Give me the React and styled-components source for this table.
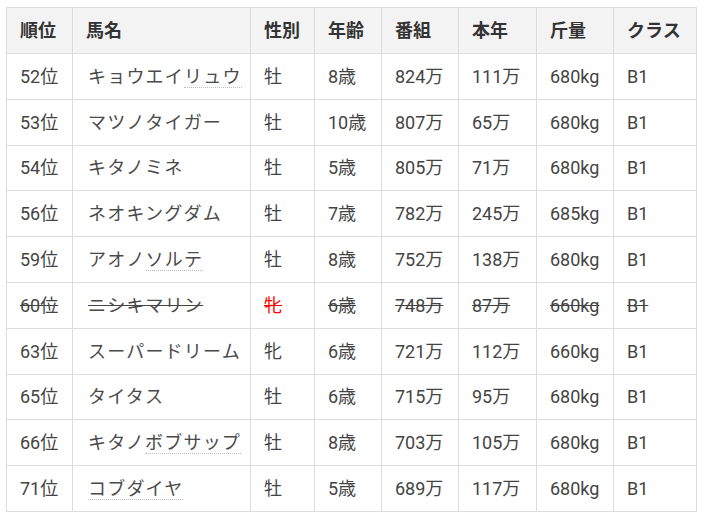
import React from "react";
import styled, { createGlobalStyle } from "styled-components";

const Global = createGlobalStyle`
  html, body { margin: 0; padding: 0; background: #fff; }
  body { font-family: Roboto, "Noto Sans CJK JP", sans-serif; color: #333; }
`;

const Wrap = styled.div`
  padding: 7px 6px;
`;

const Table = styled.table`
  border-collapse: collapse;
  width: 690px;
  table-layout: fixed;
  font-size: 18px;
  line-height: 26px;
`;

const Th = styled.th`
  background: #f3f3f3;
  border: 1px solid #dcdcdc;
  padding: 10px 13px 9px;
  text-align: left;
  font-weight: 700;
  color: #333;
  white-space: nowrap;
`;

const Td = styled.td`
  border: 1px solid #dcdcdc;
  padding: 9.8px 13px 9px;
  text-align: left;
  color: #444;
  white-space: nowrap;
  text-decoration: ${(p) => (p.$struck ? "line-through" : "none")};
  ${(p) => p.$red && "color: #ff0000;"}
`;

const Name = styled.span`
  letter-spacing: 1.2px;
  margin-left: 2px;
  color: #4a4a4a;
`;

const Dotted = styled.span`
  border-bottom: 1px dotted #bdbdbd;
`;

const cols = [66, 178, 64, 67, 77, 78, 77, 83];
const heads = ["順位", "馬名", "性別", "年齢", "番組", "本年", "斤量", "クラス"];

const rows = [
  ["52位", ["キョウエイ", "リュウ"], "牡", "8歳", "824万", "111万", "680kg", "B1"],
  ["53位", ["マツノタイガー", ""], "牡", "10歳", "807万", "65万", "680kg", "B1"],
  ["54位", ["キタノミネ", ""], "牡", "5歳", "805万", "71万", "680kg", "B1"],
  ["56位", ["ネオキングダム", ""], "牡", "7歳", "782万", "245万", "685kg", "B1"],
  ["59位", ["アオノ", "ソルテ"], "牡", "8歳", "752万", "138万", "680kg", "B1"],
  ["60位", ["ニシキマリン", ""], "牝", "6歳", "748万", "87万", "660kg", "B1", true],
  ["63位", ["スーパードリーム", ""], "牝", "6歳", "721万", "112万", "660kg", "B1"],
  ["65位", ["タイタス", ""], "牡", "6歳", "715万", "95万", "680kg", "B1"],
  ["66位", ["キタノ", "ボブサップ"], "牡", "8歳", "703万", "105万", "680kg", "B1"],
  ["71位", ["", "コブダイヤ"], "牡", "5歳", "689万", "117万", "680kg", "B1"],
];

export default function App() {
  return (
    <>
      <Global />
      <Wrap>
        <Table>
          <colgroup>
            {cols.map((w, i) => (
              <col key={i} style={{ width: w }} />
            ))}
          </colgroup>
          <thead>
            <tr>
              {heads.map((h) => (
                <Th key={h}>{h}</Th>
              ))}
            </tr>
          </thead>
          <tbody>
            {rows.map((r) => {
              const struck = !!r[8];
              return (
                <tr key={r[0]}>
                  <Td $struck={struck}>{r[0]}</Td>
                  <Td $struck={struck}>
                    <Name>
                      {r[1][0]}
                      {r[1][1] && <Dotted>{r[1][1]}</Dotted>}
                    </Name>
                  </Td>
                  <Td $struck={struck} $red={struck}>{r[2]}</Td>
                  <Td $struck={struck}>{r[3]}</Td>
                  <Td $struck={struck}>{r[4]}</Td>
                  <Td $struck={struck}>{r[5]}</Td>
                  <Td $struck={struck}>{r[6]}</Td>
                  <Td $struck={struck}>{r[7]}</Td>
                </tr>
              );
            })}
          </tbody>
        </Table>
      </Wrap>
    </>
  );
}
